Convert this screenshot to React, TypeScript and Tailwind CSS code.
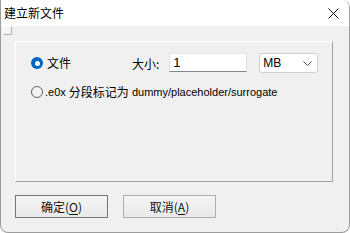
import * as React from "react";

const cjk = "font-['Microsoft_YaHei','Noto_Sans_CJK_SC',sans-serif]";
const latin = "font-['Liberation_Sans','Noto_Sans_CJK_SC',sans-serif]";

function CloseIcon() {
  return (
    <svg width="11" height="11" viewBox="0 0 11 11" className="block">
      <path d="M0.5 0.5 L10.5 10.5 M10.5 0.5 L0.5 10.5" stroke="#111" strokeWidth="1" fill="none" />
    </svg>
  );
}

function Chevron() {
  return (
    <svg width="9" height="5" viewBox="0 0 9 5" className="block">
      <path d="M0.5 0.5 L4.5 4.5 L8.5 0.5" stroke="#5a5a5a" strokeWidth="1" fill="none" />
    </svg>
  );
}

function Radio({ checked }: { checked?: boolean }) {
  if (checked) {
    return (
      <span className="flex h-[12px] w-[12px] shrink-0 items-center justify-center rounded-full bg-[#0067c0]">
        <span className="h-[5px] w-[5px] rounded-full bg-white" />
      </span>
    );
  }
  return <span className="h-[12px] w-[12px] shrink-0 rounded-full border border-[#5f5f5f] bg-[#f3f3f3]" />;
}

function Button({ label, hot, primary }: { label: string; hot: string; primary?: boolean }) {
  return (
    <button
      className={
        "flex h-[23px] w-[93px] items-center justify-center bg-gradient-to-b from-[#f4f4f4] to-[#e9e9e9] text-[12px] leading-none text-[#111] " +
        cjk +
        (primary ? " border border-[#767676]" : " border border-[#adadad]")
      }
    >
      {label}(<span className="underline underline-offset-2">{hot}</span>)
    </button>
  );
}

export default function App() {
  return (
    <div className="flex h-[233px] w-[350px] flex-col overflow-hidden rounded-tr-[8px] rounded-b-[8px] border border-t-0 border-[#9c9c9c] bg-[#f0f0f0] text-black">
      <div className="flex h-[26px] shrink-0 items-center justify-between bg-white pl-[3px] pr-[10px]">
        <span className={"text-[12px] leading-none " + cjk}>建立新文件</span>
        <CloseIcon />
      </div>

      <div className="flex flex-1 flex-col">
        <div className="ml-[2px] h-[9px] w-[9px] border border-t-white border-l-white border-r-[#b4b4b4] border-b-[#b4b4b4] bg-[#f4f4f4]" />

        <div className="ml-[14px] mt-[6px] flex h-[141px] w-[318px] flex-col border border-t-white border-l-white border-r-[#a0a0a0] border-b-[#a0a0a0] pl-[15px] pt-[11px]">
          <div className="flex h-[20px] items-start">
            <div className="mt-[3px] flex items-center gap-[4px]">
              <Radio checked />
              <span className={"text-[12px] leading-[14px] " + cjk}>文件</span>
            </div>
            <span className={"ml-[61px] mt-[4px] text-[12px] leading-[14px] " + cjk}>大小:</span>
            <div className="ml-[10px] flex h-[19px] w-[78px] items-center border border-[#e3e3e3] border-b-[#858585] bg-white pl-[3px]">
              <span className={"text-[13px] leading-none " + latin}>1</span>
            </div>
            <div className="ml-[12px] flex h-[20px] w-[59px] items-center justify-between rounded-[3px] border border-[#d0d0d0] bg-white pl-[3px] pr-[5px]">
              <span className={"text-[12px] leading-none " + latin}>MB</span>
              <Chevron />
            </div>
          </div>

          <div className="mt-[10px] flex items-center gap-[2px]">
            <Radio />
            <span className="flex items-center whitespace-nowrap">
              <span className={"text-[11px] " + latin}>.e0x&nbsp;</span>
              <span className={"text-[12px] " + cjk}>分段标记为</span>
              <span className={"text-[11px] " + latin}>&nbsp;dummy/placeholder/surrogate</span>
            </span>
          </div>
        </div>

        <div className="ml-[14px] mt-[13px] flex gap-[15px]">
          <Button label="确定" hot="O" primary />
          <Button label="取消" hot="A" />
        </div>
      </div>
    </div>
  );
}
